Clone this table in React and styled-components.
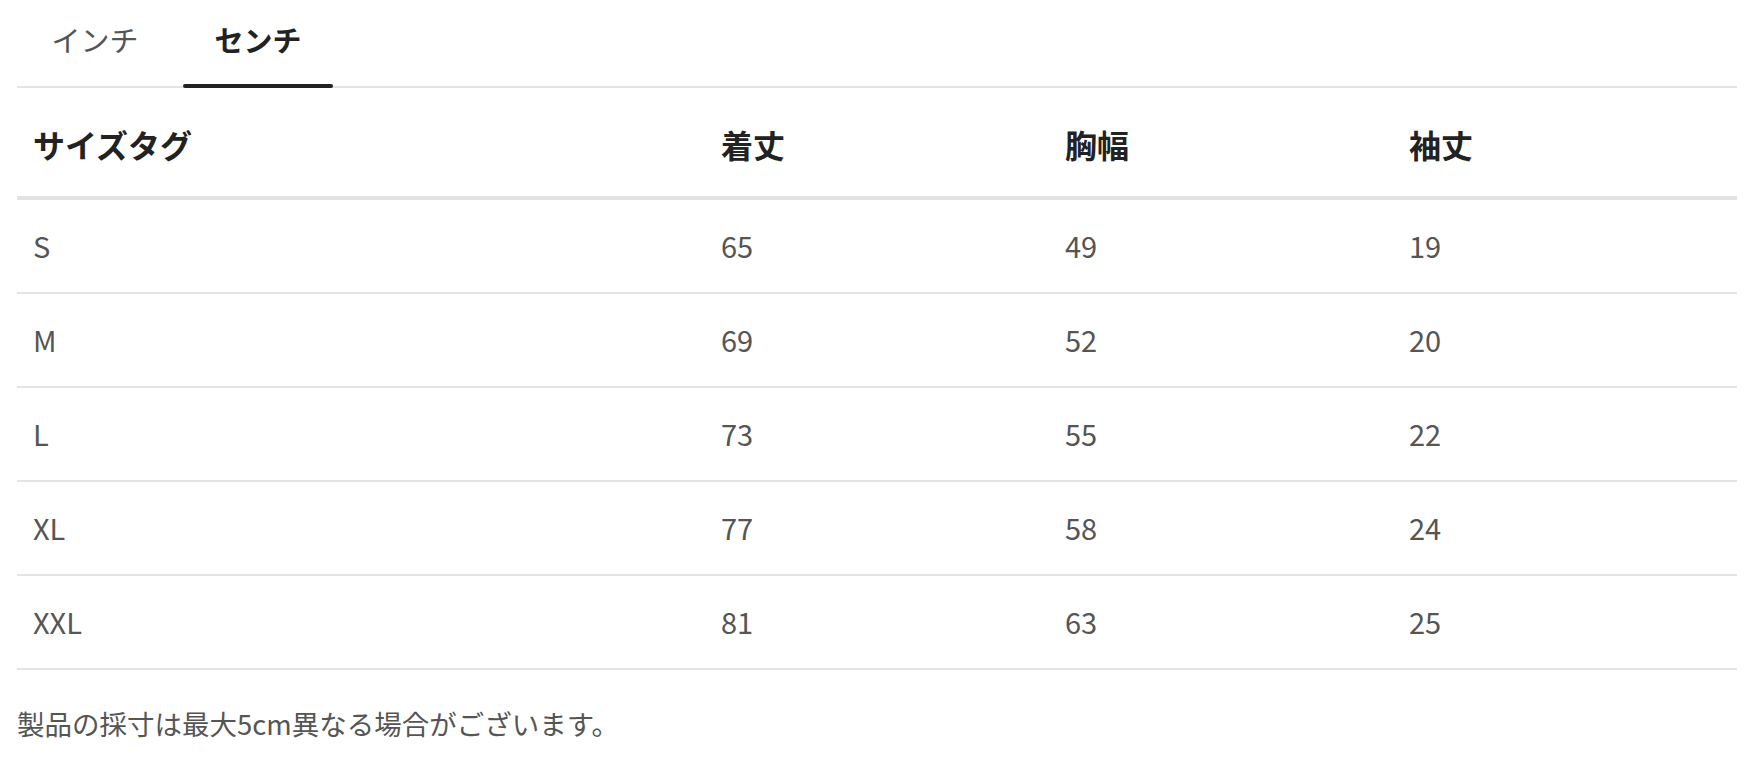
import styled, { createGlobalStyle } from "styled-components";

const GlobalStyle = createGlobalStyle`
  body {
    margin: 0;
    background: #fff;
    font-family: "Noto Sans CJK JP", "Noto Sans", sans-serif;
  }
`;

const Wrapper = styled.div`
  padding: 0 12px 0 17px;
`;

const TabList = styled.div`
  display: flex;
  gap: 13px;
  padding-left: 3px;
  border-bottom: 2px solid #e4e4e4;
`;

const Tab = styled.button`
  position: relative;
  width: 150px;
  padding: 19px 0 27px;
  border: none;
  background: none;
  font-family: inherit;
  font-size: 29px;
  line-height: 40px;
  font-weight: ${(p) => (p.$active ? 700 : 400)};
  color: ${(p) => (p.$active ? "#222" : "#555")};
  cursor: pointer;

  &::after {
    content: "";
    display: ${(p) => (p.$active ? "block" : "none")};
    position: absolute;
    left: 0;
    right: 0;
    bottom: -2px;
    height: 4px;
    border-radius: 2px;
    background: #222;
  }
`;

const Table = styled.table`
  width: 100%;
  border-collapse: collapse;
  table-layout: fixed;
`;

const Th = styled.th`
  text-align: left;
  padding: 36px 16px 32px;
  font-size: 32px;
  line-height: 40px;
  font-weight: 700;
  color: #222;
  border-bottom: 4px solid #e2e2e2;
`;

const Td = styled.td`
  padding: 25px 16px 27px;
  font-size: 29px;
  line-height: 40px;
  font-weight: 400;
  color: #555;
  border-bottom: 2px solid #e4e4e4;
`;

const Note = styled.p`
  margin: 33px 0 0;
  font-size: 27.5px;
  line-height: 40px;
  color: #555;
`;

const rows = [
  ["S", 65, 49, 19],
  ["M", 69, 52, 20],
  ["L", 73, 55, 22],
  ["XL", 77, 58, 24],
  ["XXL", 81, 63, 25],
];

export default function App() {
  return (
    <>
      <GlobalStyle />
      <Wrapper>
        <TabList>
          <Tab>インチ</Tab>
          <Tab $active>センチ</Tab>
        </TabList>
        <Table>
          <colgroup>
            <col style={{ width: "40%" }} />
            <col style={{ width: "20%" }} />
            <col style={{ width: "20%" }} />
            <col style={{ width: "20%" }} />
          </colgroup>
          <thead>
            <tr>
              <Th>サイズタグ</Th>
              <Th>着丈</Th>
              <Th>胸幅</Th>
              <Th>袖丈</Th>
            </tr>
          </thead>
          <tbody>
            {rows.map((r) => (
              <tr key={r[0]}>
                {r.map((c, i) => (
                  <Td key={i}>{c}</Td>
                ))}
              </tr>
            ))}
          </tbody>
        </Table>
        <Note>製品の採寸は最大5cm異なる場合がございます。</Note>
      </Wrapper>
    </>
  );
}
